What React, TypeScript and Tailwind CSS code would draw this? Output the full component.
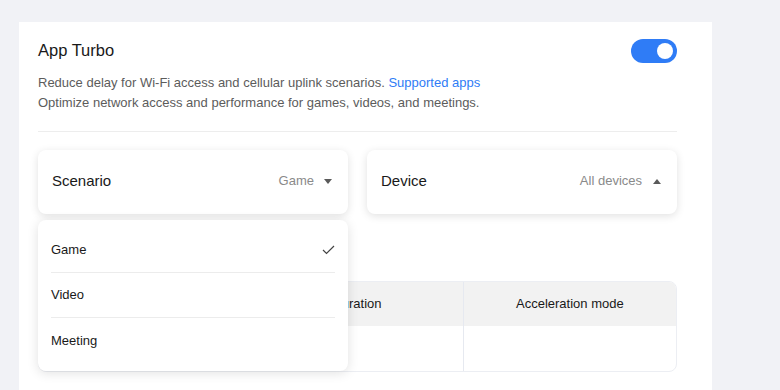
import { useState } from 'react';

const font = { fontFamily: '"Liberation Sans", Arial, sans-serif' };

const Caret = ({ up }: { up?: boolean }) => (
  <svg width="8" height="5" viewBox="0 0 8 5" className="text-[#5a5a5a]">
    <path d={up ? 'M0 5 L4 0 L8 5 Z' : 'M0 0 L8 0 L4 5 Z'} fill="currentColor" />
  </svg>
);

const scenarios = ['Game', 'Video', 'Meeting'];

export default function App() {
  const [enabled, setEnabled] = useState(true);
  const [scenario, setScenario] = useState('Game');

  return (
    <div
      className="w-[780px] h-[390px] overflow-hidden bg-[#f1f2f6] text-[#191919]"
      style={font}
    >
      <div className="ml-[19px] mt-[22px] w-[693px] h-[368px] bg-white pl-[19px] pr-[35px] pt-[16px]">
        <div className="flex items-start justify-between">
          <h1 className="text-[16.5px] leading-[24px]">App Turbo</h1>
          <button
            onClick={() => setEnabled(!enabled)}
            className={`mt-[1px] flex h-[24px] w-[46px] items-center rounded-full px-[4px] ${
              enabled ? 'justify-end bg-[#2f7cf6]' : 'justify-start bg-[#c8c8c8]'
            }`}
          >
            <span className="h-[16px] w-[16px] rounded-full bg-white" />
          </button>
        </div>
        <div className="mt-[10px] text-[13px] leading-[20px] text-[#5c5c5c]">
          <p>
            Reduce delay for Wi-Fi access and cellular uplink scenarios.{' '}
            <a className="text-[#2f7cf6]">Supported apps</a>
          </p>
          <p>Optimize network access and performance for games, videos, and meetings.</p>
        </div>
        <div className="mt-[18px] h-px bg-[#ededed]" />

        <div className="relative mt-[18px] grid grid-cols-2 gap-[19px]">
          <div className="flex h-[64px] items-center justify-between rounded-lg bg-white pb-[2px] pl-[14px] pr-[16px] shadow-[0_2px_8px_rgba(0,0,0,0.12)]">
            <span className="text-[15px]">Scenario</span>
            <span className="flex items-center gap-[10px] text-[13px] text-[#8a8a8a]">
              {scenario}
              <Caret />
            </span>
          </div>
          <div className="flex h-[64px] items-center justify-between rounded-lg bg-white pb-[2px] pl-[14px] pr-[16px] shadow-[0_2px_8px_rgba(0,0,0,0.12)]">
            <span className="text-[15px]">Device</span>
            <span className="flex items-center gap-[11px] text-[13px] text-[#8a8a8a]">
              All devices
              <Caret up />
            </span>
          </div>

          <div className="absolute left-0 top-[70px] z-10 w-[310px] rounded-lg bg-white px-[13px] py-[8px] shadow-[0_2px_12px_rgba(0,0,0,0.12)]">
            {scenarios.map((s, i) => (
              <div
                key={s}
                onClick={() => setScenario(s)}
                className={`flex h-[45px] items-center justify-between text-[13px] ${
                  i < scenarios.length - 1 ? 'border-b border-[#ececec]' : ''
                }`}
              >
                <span>{s}</span>
                {s === scenario && (
                  <svg width="13" height="10" viewBox="0 0 13 10">
                    <path d="M1 5 L4.5 8.5 L12 1" fill="none" stroke="#444" strokeWidth="1.2" />
                  </svg>
                )}
              </div>
            ))}
          </div>
        </div>

        <div className="mt-[67px] overflow-hidden rounded-lg border border-[#eceef3] text-[13px]">
          <div className="grid h-[44px] grid-cols-3 bg-[#f2f2f2]">
            <div className="flex items-center justify-center">Device name</div>
            <div className="flex items-center justify-center border-r border-[#e6e9f0]">Duration</div>
            <div className="flex items-center justify-center">Acceleration mode</div>
          </div>
          <div className="grid h-[45px] grid-cols-3">
            <div />
            <div className="border-r border-[#e6e9f0]" />
            <div />
          </div>
        </div>
      </div>
    </div>
  );
}
